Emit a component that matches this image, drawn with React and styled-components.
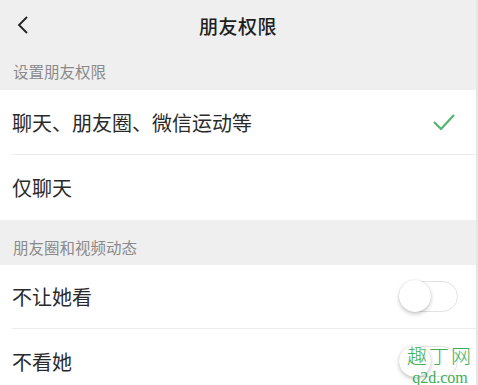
import React, { useState } from 'react';
import styled, { createGlobalStyle } from 'styled-components';

const GlobalStyle = createGlobalStyle`
  html, body {
    margin: 0;
    padding: 0;
    background: #efefef;
  }
  body {
    font-family: "Noto Sans CJK SC", "Noto Sans", sans-serif;
    -webkit-font-smoothing: antialiased;
  }
`;

const Page = styled.div`
  width: 476px;
  height: 385px;
  overflow: hidden;
  background: #efefef;
  border-right: 2px solid #e6e6e6;
  position: relative;
`;

const Header = styled.header`
  height: 50px;
  display: grid;
  grid-template-columns: 60px 1fr 60px;
  align-items: center;
`;

const Back = styled.button`
  border: none;
  background: none;
  padding: 0 0 0 16px;
  height: 50px;
  display: flex;
  align-items: center;
  cursor: pointer;
`;

const Title = styled.h1`
  margin: 0;
  text-align: center;
  font-size: 19px;
  font-weight: 500;
  color: #1e1e1e;
  letter-spacing: 0.5px;
`;

const SectionLabel = styled.div`
  height: ${(p) => p.$h}px;
  box-sizing: border-box;
  padding: 0 13px ${(p) => p.$pb}px;
  display: flex;
  align-items: flex-end;
  font-size: 15.5px;
  color: #8a8a8a;
`;

const Group = styled.div`
  background: #fff;
`;

const Row = styled.div`
  height: ${(p) => p.$h}px;
  margin-left: 12px;
  padding-right: 20px;
  display: flex;
  align-items: center;
  justify-content: space-between;
  border-bottom: ${(p) => (p.$last ? 'none' : '1px solid #ececec')};
  box-sizing: border-box;
  cursor: pointer;
`;

const RowText = styled.span`
  font-size: 20px;
  color: #2a2a2a;
`;

const Track = styled.button`
  width: 58px;
  height: 31px;
  border-radius: 16px;
  border: 1.5px solid #e2e2e2;
  background: #fff;
  padding: 0;
  position: relative;
  margin-right: -2px;
  cursor: pointer;
`;

const Knob = styled.span`
  position: absolute;
  top: -2px;
  left: ${(p) => (p.$on ? '25px' : '-2px')};
  width: 32px;
  height: 32px;
  border-radius: 50%;
  background: #fff;
  box-shadow: 0 2px 4px rgba(0, 0, 0, 0.22), 0 0 1px rgba(0, 0, 0, 0.2);
`;

const Watermark = styled.div`
  position: absolute;
  right: 3px;
  bottom: 0;
  display: flex;
  flex-direction: column;
  align-items: center;
  gap: 4px;
  color: #3fae55;
  font-family: "Liberation Serif", serif;
  pointer-events: none;
`;

const WmTop = styled.span`
  font-size: 20px;
  line-height: 20px;
  letter-spacing: 2px;
  font-family: "Noto Sans CJK SC", serif;
  font-weight: 300;
`;

const WmBottom = styled.span`
  font-size: 16px;
  line-height: 15px;
`;

function Switch({ on, onToggle }) {
  return (
    <Track onClick={onToggle}>
      <Knob $on={on} />
    </Track>
  );
}

function Check() {
  return (
    <svg width="24" height="20" viewBox="0 0 24 20">
      <path d="M2 10 L9 17 L22 3" fill="none" stroke="#4fb46f" strokeWidth="2.2" />
    </svg>
  );
}

export default function App() {
  const [choice, setChoice] = useState(0);
  const [hideFrom, setHideFrom] = useState(false);
  const [dontSee, setDontSee] = useState(false);

  return (
    <>
      <GlobalStyle />
      <Page>
        <Header>
          <Back aria-label="返回">
            <svg width="14" height="20" viewBox="0 0 14 20">
              <path d="M11 2 L3 10 L11 18" fill="none" stroke="#222" strokeWidth="1.8" />
            </svg>
          </Back>
          <Title>朋友权限</Title>
          <span />
        </Header>

        <SectionLabel $h={40} $pb={8}>设置朋友权限</SectionLabel>
        <Group>
          <Row $h={65} onClick={() => setChoice(0)}>
            <RowText>聊天、朋友圈、微信运动等</RowText>
            {choice === 0 && <Check />}
          </Row>
          <Row $h={65} $last onClick={() => setChoice(1)}>
            <RowText>仅聊天</RowText>
            {choice === 1 && <Check />}
          </Row>
        </Group>

        <SectionLabel $h={45} $pb={7}>朋友圈和视频动态</SectionLabel>
        <Group>
          <Row $h={64}>
            <RowText>不让她看</RowText>
            <Switch on={hideFrom} onToggle={() => setHideFrom(!hideFrom)} />
          </Row>
          <Row $h={65} $last>
            <RowText>不看她</RowText>
            <Switch on={dontSee} onToggle={() => setDontSee(!dontSee)} />
          </Row>
        </Group>

        <Watermark>
          <WmTop>趣丁网</WmTop>
          <WmBottom>q2d.com</WmBottom>
        </Watermark>
      </Page>
    </>
  );
}
